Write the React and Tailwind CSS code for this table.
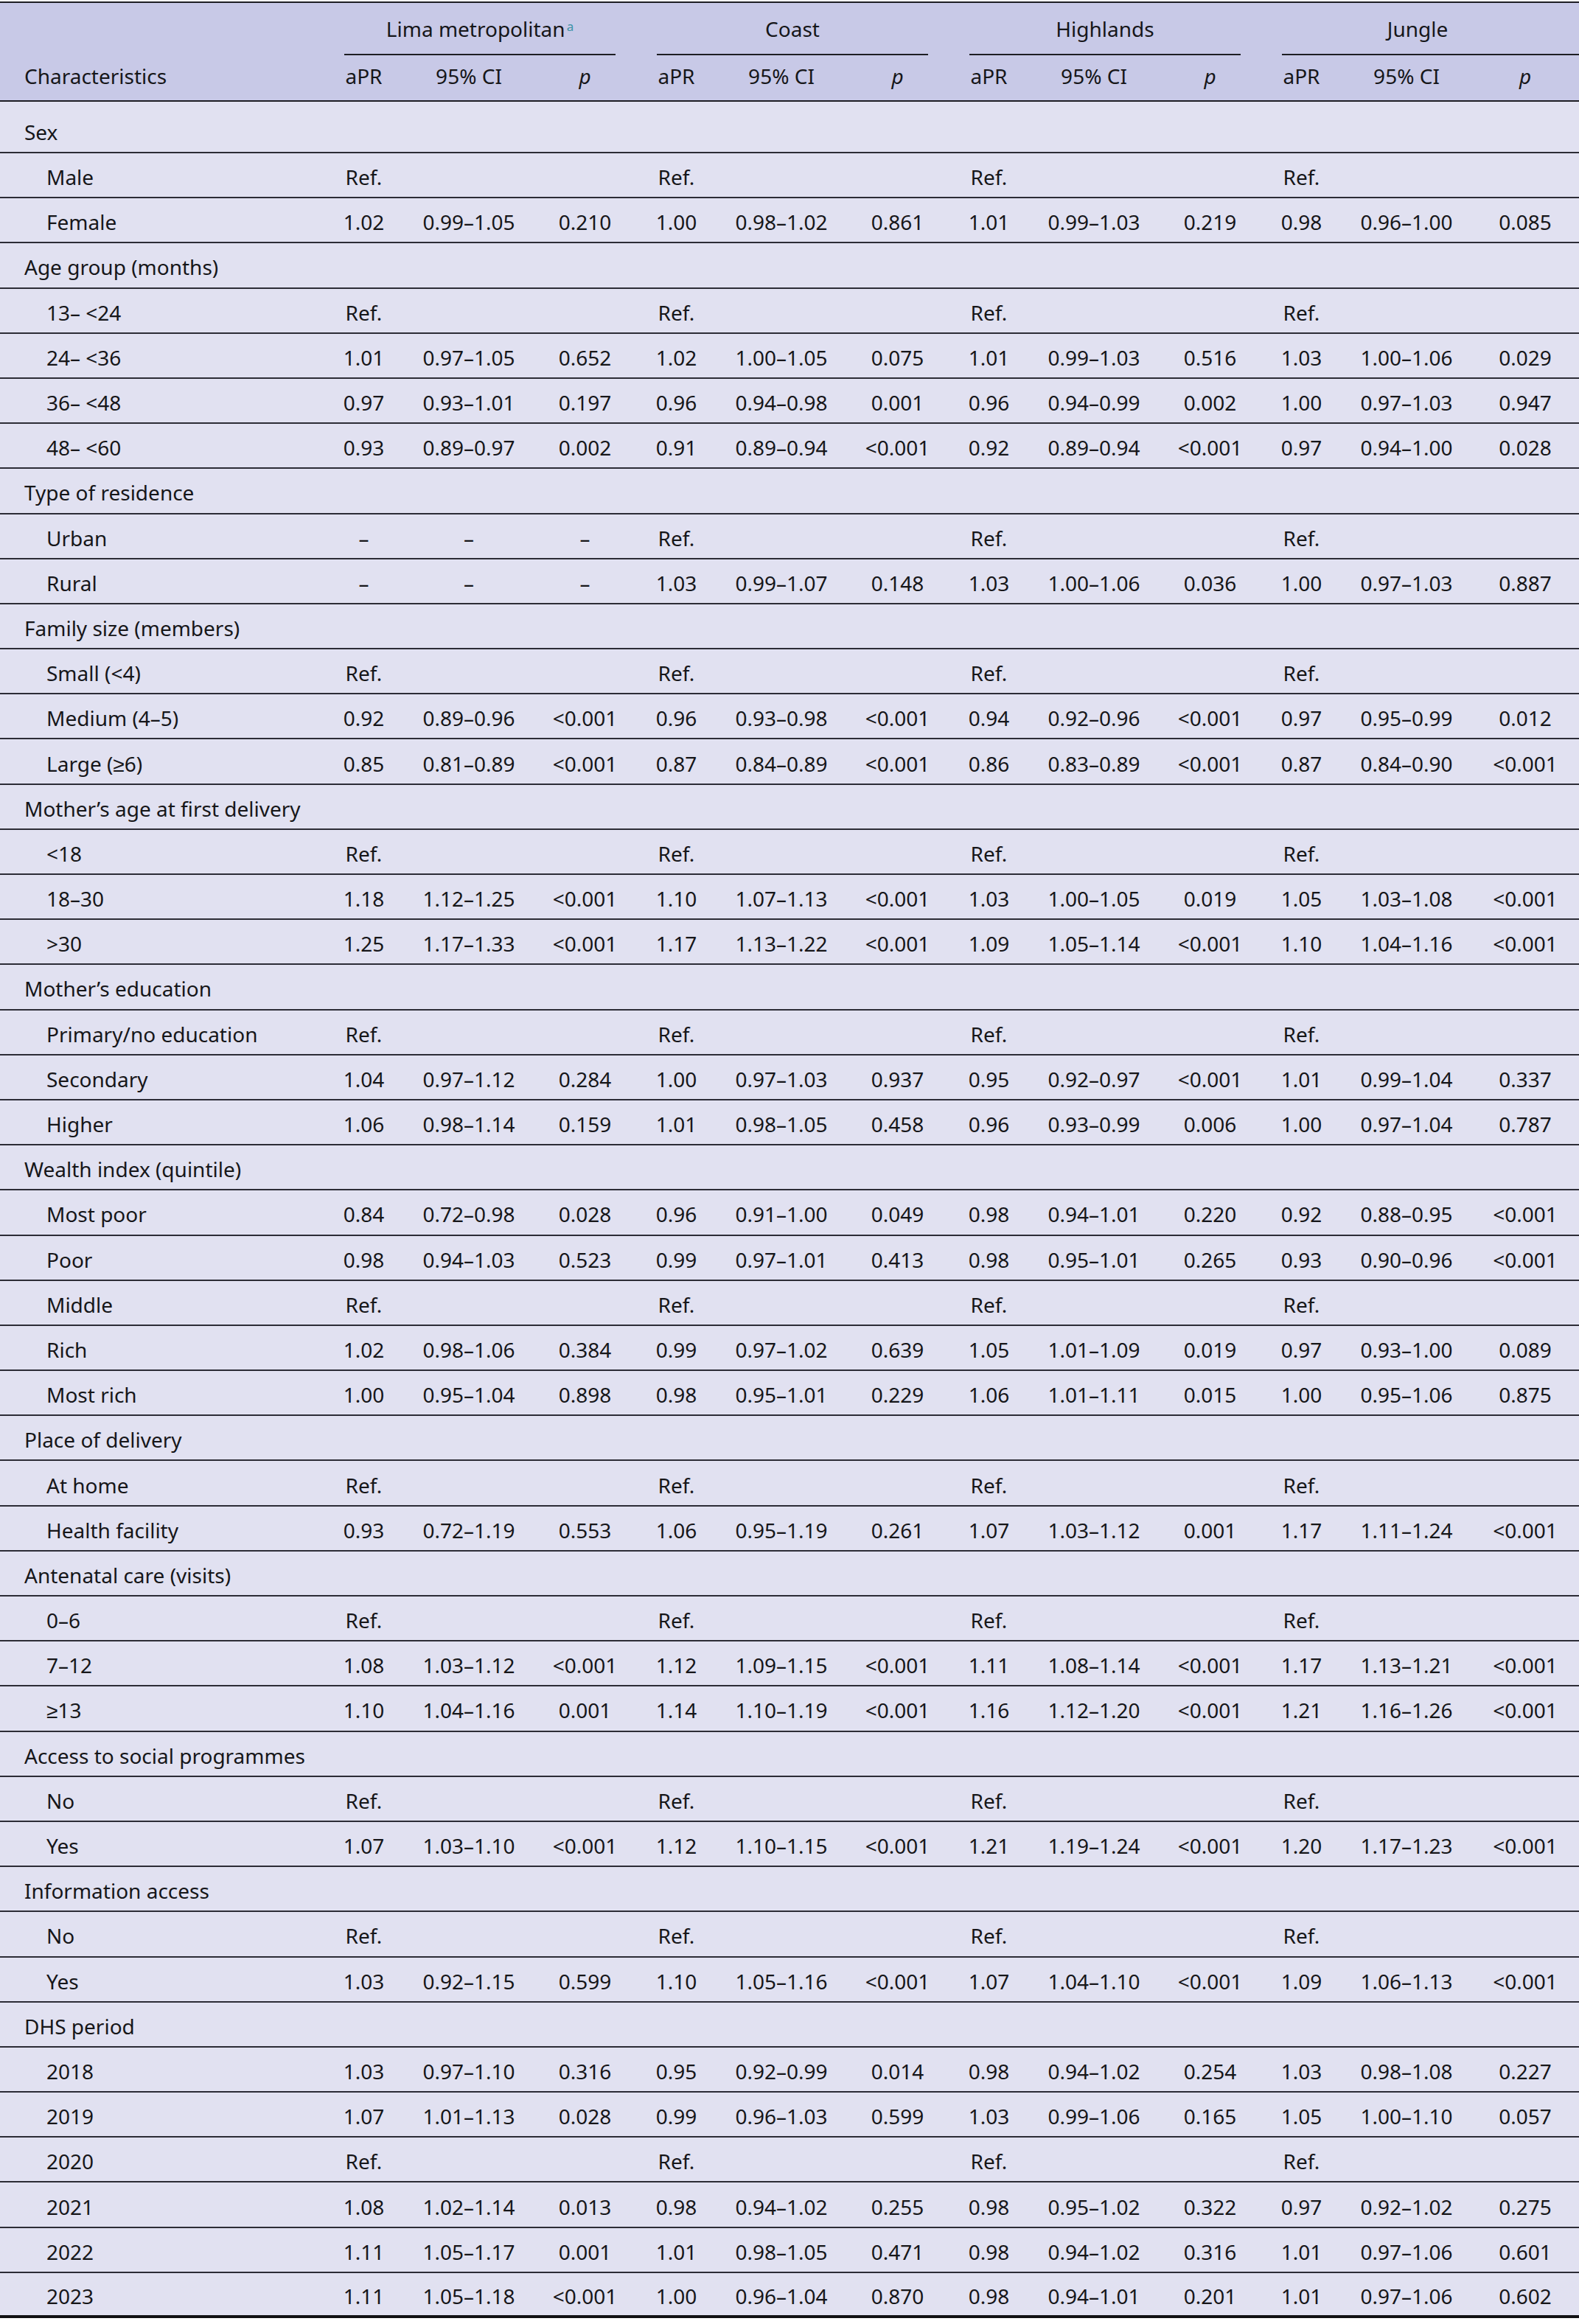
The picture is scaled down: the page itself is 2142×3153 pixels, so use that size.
import React from 'react';

const cols =
  'grid grid-cols-[439px_109px_176px_139px_109px_176px_139px_109px_176px_139px_109px_176px_1fr]';

const groups = ['Lima metropolitan', 'Coast', 'Highlands', 'Jungle'];

// each data row: [label, indented, values] - values are 12 cells, "_" means empty
const rows = [
  ['Sex', false],
  ['Male', true, 'Ref. _ _ Ref. _ _ Ref. _ _ Ref. _ _'],
  ['Female', true, '1.02 0.99–1.05 0.210 1.00 0.98–1.02 0.861 1.01 0.99–1.03 0.219 0.98 0.96–1.00 0.085'],
  ['Age group (months)', false],
  ['13– <24', true, 'Ref. _ _ Ref. _ _ Ref. _ _ Ref. _ _'],
  ['24– <36', true, '1.01 0.97–1.05 0.652 1.02 1.00–1.05 0.075 1.01 0.99–1.03 0.516 1.03 1.00–1.06 0.029'],
  ['36– <48', true, '0.97 0.93–1.01 0.197 0.96 0.94–0.98 0.001 0.96 0.94–0.99 0.002 1.00 0.97–1.03 0.947'],
  ['48– <60', true, '0.93 0.89–0.97 0.002 0.91 0.89–0.94 <0.001 0.92 0.89–0.94 <0.001 0.97 0.94–1.00 0.028'],
  ['Type of residence', false],
  ['Urban', true, '– – – Ref. _ _ Ref. _ _ Ref. _ _'],
  ['Rural', true, '– – – 1.03 0.99–1.07 0.148 1.03 1.00–1.06 0.036 1.00 0.97–1.03 0.887'],
  ['Family size (members)', false],
  ['Small (<4)', true, 'Ref. _ _ Ref. _ _ Ref. _ _ Ref. _ _'],
  ['Medium (4–5)', true, '0.92 0.89–0.96 <0.001 0.96 0.93–0.98 <0.001 0.94 0.92–0.96 <0.001 0.97 0.95–0.99 0.012'],
  ['Large (≥6)', true, '0.85 0.81–0.89 <0.001 0.87 0.84–0.89 <0.001 0.86 0.83–0.89 <0.001 0.87 0.84–0.90 <0.001'],
  ['Mother’s age at first delivery', false],
  ['<18', true, 'Ref. _ _ Ref. _ _ Ref. _ _ Ref. _ _'],
  ['18–30', true, '1.18 1.12–1.25 <0.001 1.10 1.07–1.13 <0.001 1.03 1.00–1.05 0.019 1.05 1.03–1.08 <0.001'],
  ['>30', true, '1.25 1.17–1.33 <0.001 1.17 1.13–1.22 <0.001 1.09 1.05–1.14 <0.001 1.10 1.04–1.16 <0.001'],
  ['Mother’s education', false],
  ['Primary/no education', true, 'Ref. _ _ Ref. _ _ Ref. _ _ Ref. _ _'],
  ['Secondary', true, '1.04 0.97–1.12 0.284 1.00 0.97–1.03 0.937 0.95 0.92–0.97 <0.001 1.01 0.99–1.04 0.337'],
  ['Higher', true, '1.06 0.98–1.14 0.159 1.01 0.98–1.05 0.458 0.96 0.93–0.99 0.006 1.00 0.97–1.04 0.787'],
  ['Wealth index (quintile)', false],
  ['Most poor', true, '0.84 0.72–0.98 0.028 0.96 0.91–1.00 0.049 0.98 0.94–1.01 0.220 0.92 0.88–0.95 <0.001'],
  ['Poor', true, '0.98 0.94–1.03 0.523 0.99 0.97–1.01 0.413 0.98 0.95–1.01 0.265 0.93 0.90–0.96 <0.001'],
  ['Middle', true, 'Ref. _ _ Ref. _ _ Ref. _ _ Ref. _ _'],
  ['Rich', true, '1.02 0.98–1.06 0.384 0.99 0.97–1.02 0.639 1.05 1.01–1.09 0.019 0.97 0.93–1.00 0.089'],
  ['Most rich', true, '1.00 0.95–1.04 0.898 0.98 0.95–1.01 0.229 1.06 1.01–1.11 0.015 1.00 0.95–1.06 0.875'],
  ['Place of delivery', false],
  ['At home', true, 'Ref. _ _ Ref. _ _ Ref. _ _ Ref. _ _'],
  ['Health facility', true, '0.93 0.72–1.19 0.553 1.06 0.95–1.19 0.261 1.07 1.03–1.12 0.001 1.17 1.11–1.24 <0.001'],
  ['Antenatal care (visits)', false],
  ['0–6', true, 'Ref. _ _ Ref. _ _ Ref. _ _ Ref. _ _'],
  ['7–12', true, '1.08 1.03–1.12 <0.001 1.12 1.09–1.15 <0.001 1.11 1.08–1.14 <0.001 1.17 1.13–1.21 <0.001'],
  ['≥13', true, '1.10 1.04–1.16 0.001 1.14 1.10–1.19 <0.001 1.16 1.12–1.20 <0.001 1.21 1.16–1.26 <0.001'],
  ['Access to social programmes', false],
  ['No', true, 'Ref. _ _ Ref. _ _ Ref. _ _ Ref. _ _'],
  ['Yes', true, '1.07 1.03–1.10 <0.001 1.12 1.10–1.15 <0.001 1.21 1.19–1.24 <0.001 1.20 1.17–1.23 <0.001'],
  ['Information access', false],
  ['No', true, 'Ref. _ _ Ref. _ _ Ref. _ _ Ref. _ _'],
  ['Yes', true, '1.03 0.92–1.15 0.599 1.10 1.05–1.16 <0.001 1.07 1.04–1.10 <0.001 1.09 1.06–1.13 <0.001'],
  ['DHS period', false],
  ['2018', true, '1.03 0.97–1.10 0.316 0.95 0.92–0.99 0.014 0.98 0.94–1.02 0.254 1.03 0.98–1.08 0.227'],
  ['2019', true, '1.07 1.01–1.13 0.028 0.99 0.96–1.03 0.599 1.03 0.99–1.06 0.165 1.05 1.00–1.10 0.057'],
  ['2020', true, 'Ref. _ _ Ref. _ _ Ref. _ _ Ref. _ _'],
  ['2021', true, '1.08 1.02–1.14 0.013 0.98 0.94–1.02 0.255 0.98 0.95–1.02 0.322 0.97 0.92–1.02 0.275'],
  ['2022', true, '1.11 1.05–1.17 0.001 1.01 0.98–1.05 0.471 0.98 0.94–1.02 0.316 1.01 0.97–1.06 0.601'],
  ['2023', true, '1.11 1.05–1.18 <0.001 1.00 0.96–1.04 0.870 0.98 0.94–1.01 0.201 1.01 0.97–1.06 0.602'],
];

function Header() {
  return (
    <div className="mt-[2px] border-t-2 border-[#1e1e24] bg-[#c8c9e7]">
      {/* group titles */}
      <div className={`${cols} h-[71px]`}>
        <div />
        {groups.map((g, i) => (
          <div key={g} className="col-span-3 flex flex-col">
            <div
              className={`flex flex-1 items-center justify-center pt-[1px] ${
                i === 3 ? 'pl-[28px] pr-[35px]' : 'px-[28px]'
              }`}
            >
              <span>
                {g}
                {i === 0 && (
                  <sup className="ml-[2px] text-[17px] text-[#3d93a6]">a</sup>
                )}
              </span>
            </div>
            <div
              className={`h-[2px] bg-[#1e1e24] ${i === 3 ? 'ml-[28px]' : 'mx-[28px]'}`}
            />
          </div>
        ))}
      </div>
      {/* sub headings */}
      <div className={`${cols} h-[63px] border-b-2 border-[#1e1e24] pb-[6px]`}>
        <div className="flex items-center pl-[33px]">Characteristics</div>
        {groups.map((g) => (
          <React.Fragment key={g}>
            <div className="flex items-center justify-center">aPR</div>
            <div className="flex items-center justify-center">95% CI</div>
            <div className="flex items-center justify-center italic">p</div>
          </React.Fragment>
        ))}
      </div>
    </div>
  );
}

function Row({ label, indent, values, first, last }) {
  const cells = values ? values.split(' ').map((v) => (v === '_' ? '' : v)) : [];
  const height = first ? 'h-[70px] pt-[14px]' : 'h-[61.2px] pt-[5px]';
  const border = last ? 'border-b-4 border-[#111114]' : 'border-b-2 border-[#2c2c36]';
  return (
    <div className={`${cols} ${height} ${border}`}>
      <div className={`flex items-center whitespace-nowrap ${indent ? 'pl-[63px]' : 'pl-[33px]'}`}>
        {label}
      </div>
      {cells.map((c, i) => (
        <div key={i} className="flex items-center justify-center whitespace-nowrap">
          {c}
        </div>
      ))}
    </div>
  );
}

export default function App() {
  return (
    <div className="w-[2142px] bg-white font-['Noto_Sans',sans-serif] text-[28px] leading-[36px] text-[#161619]">
      <Header />
      <div className="bg-[#e1e1f1]">
        {rows.map(([label, indent, values], i) => (
          <Row
            key={i}
            label={label}
            indent={indent}
            values={values}
            first={i === 0}
            last={i === rows.length - 1}
          />
        ))}
      </div>
    </div>
  );
}
